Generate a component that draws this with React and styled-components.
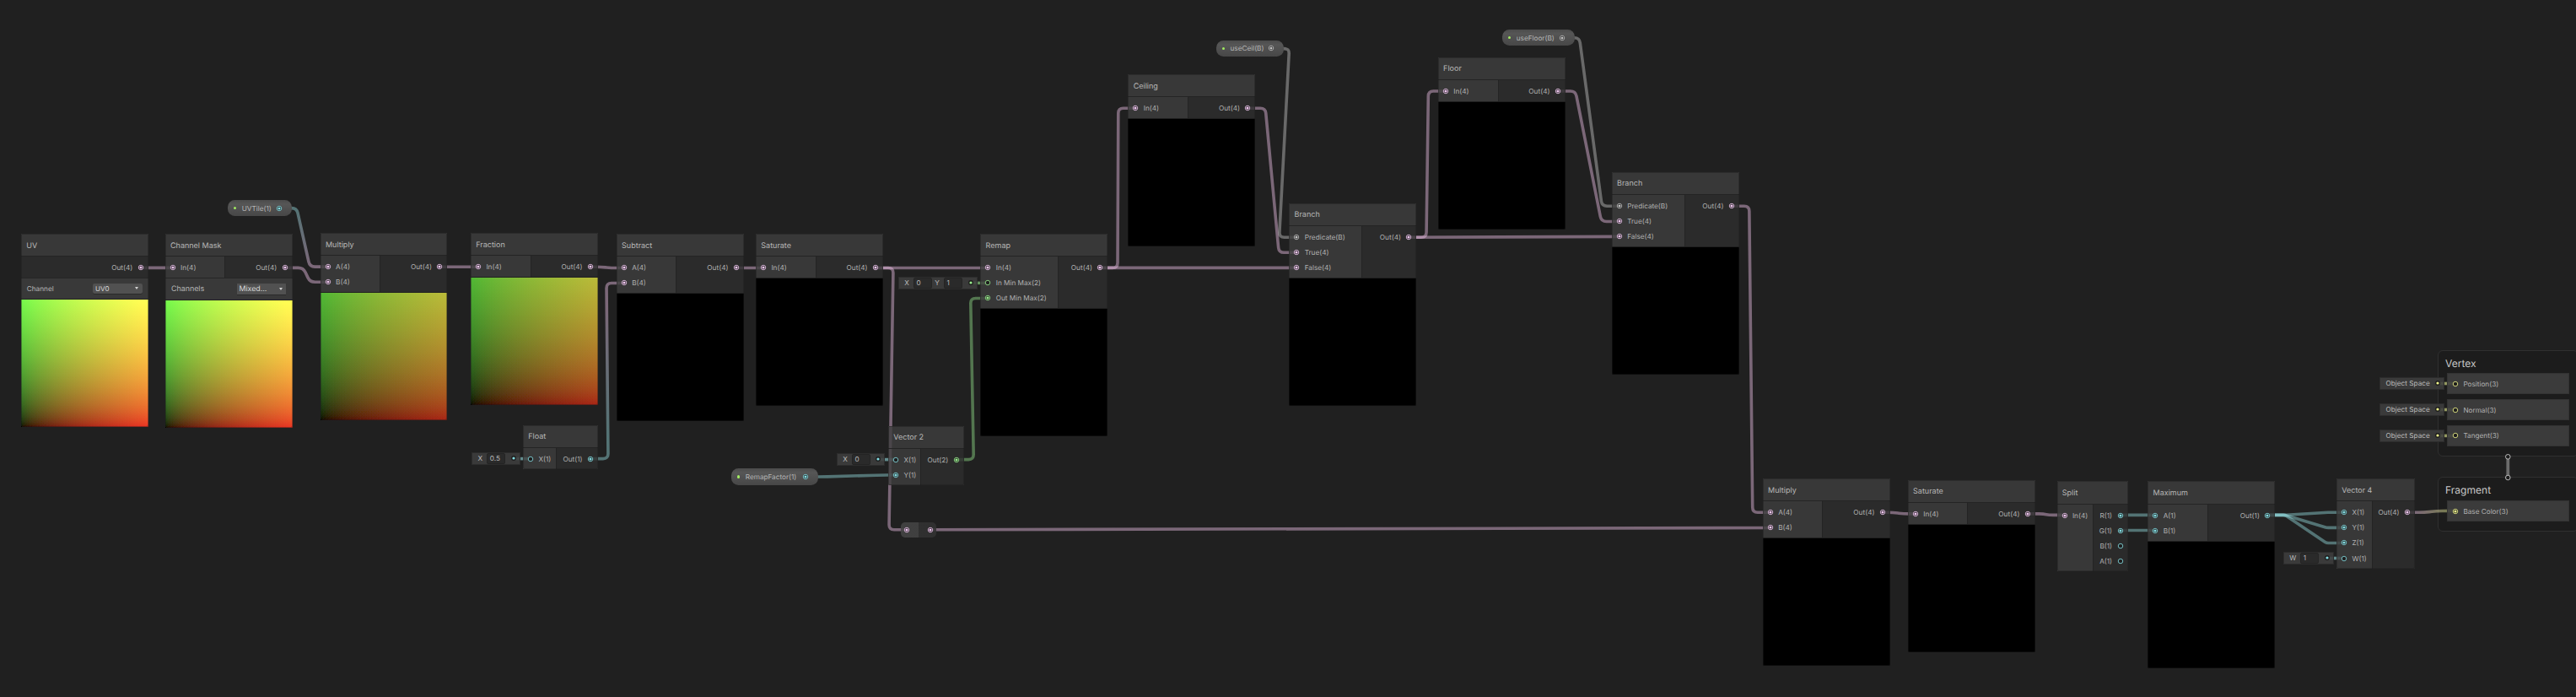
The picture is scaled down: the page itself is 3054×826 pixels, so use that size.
import React from "react";
import styled, { createGlobalStyle, css } from "styled-components";

const GlobalStyle = createGlobalStyle`
  html, body { margin: 0; background: #202020; overflow: hidden; }
  body { font-family: Inter, "Liberation Sans", sans-serif; text-rendering: geometricPrecision; }
  * { box-sizing: border-box; }
`;

const TYPES = {
  vec4: { port: "#f2c8f2", wire: "#fbcbf4" },
  vec3: { port: "#f0f58c", wire: "#f6ff9a" },
  vec2: { port: "#9aee8e", wire: "#9aef92" },
  float: { port: "#84dce2", wire: "#9be6ea" },
  bool: { port: "#c4c4c4", wire: "#d0d0d0" },
};

/* ---------- canvas ---------- */

const Canvas = styled.main`
  position: relative;
  width: 3054px;
  height: 826px;
  overflow: hidden;
  background: #202020;
`;

const WireLayer = styled.svg`
  position: absolute;
  inset: 0;
  width: 3054px;
  height: 826px;
  pointer-events: none;
`;

const onCanvas = css`
  position: absolute;
  left: ${(p) => p.$x}px;
  top: ${(p) => p.$y}px;
`;

/* ---------- node ---------- */

const NodeFrame = styled.section`
  ${onCanvas}
  width: ${(p) => p.$w}px;
  display: flex;
  flex-direction: column;
  border-radius: 1px 1px 2px 2px;

  &::after {
    content: "";
    position: absolute;
    inset: 0;
    border: 1px solid rgba(28, 28, 28, 0.42);
    border-radius: inherit;
    pointer-events: none;
  }
`;

const NodeHeader = styled.header`
  height: 27.3px;
  padding: 2px 6.3px 0;
  display: flex;
  align-items: center;
  font-size: 9px;
  color: #b8b8b8;
  background: rgba(63, 63, 63, 0.8);
  border-bottom: 1px solid #242424;
`;

const NodePorts = styled.div`
  display: flex;
  height: ${(p) => 6.9 + p.$rows * 18.1}px;
`;

const InputColumn = styled.div`
  width: ${(p) => p.$w}px;
  flex: none;
  padding: 3.9px 0 0 5px;
  background: rgba(63, 63, 63, 0.8);
  border-right: 1px solid #242424;
`;

const OutputColumn = styled.div`
  flex: 1;
  padding: 3.9px 5px 0 0;
  background: rgba(46, 46, 46, 0.8);
`;

const PortRow = styled.div`
  height: 18.1px;
  display: flex;
  align-items: center;
  justify-content: ${(p) => (p.$out ? "flex-end" : "flex-start")};
  gap: 5.4px;
  font-size: 8.2px;
  line-height: 10px;
  white-space: nowrap;
  color: #b2b2b2;
`;

const PortIcon = styled.svg`
  width: 8px;
  height: 8px;
  flex: none;
  display: block;
  overflow: visible;
`;

const Preview = styled.div`
  position: relative;
  height: 150.6px;
  margin-top: 1px;
  border-radius: 0 0 2px 2px;
  overflow: hidden;
  isolation: isolate;
  background: #000;
`;

/* Channels are summed in linear light, then encoded by the filter. */
const UVPreview = styled(Preview)`
  filter: url(#encode);
`;

const Channel = styled.div`
  position: absolute;
  inset: 0;
  mix-blend-mode: plus-lighter;
  background: linear-gradient(${(p) => p.$dir}, #000, ${(p) => p.$color});
`;

const OptionRow = styled.div`
  height: ${(p) => p.$h}px;
  margin-top: -0.4px;
  border-top: 1px solid #262626;
  padding: 0 ${(p) => (p.$bold ? 7.3 : 6.8)}px;
  display: flex;
  align-items: center;
  justify-content: space-between;
  background: #393939;
  color: #b8b8b8;
  font-size: ${(p) => (p.$bold ? 8.9 : 8.2)}px;
`;

const Dropdown = styled.div`
  width: 58.5px;
  height: ${(p) => (p.$bold ? 12.5 : 11.2)}px;
  padding: 0 4.5px 0 2.6px;
  display: flex;
  align-items: center;
  justify-content: space-between;
  border-radius: ${(p) => (p.$bold ? 0.5 : 2)}px;
  background: #515151;
  box-shadow: 0 0.7px 0.6px #242424;
  color: #dcdcdc;
  font-size: ${(p) => (p.$bold ? 8.8 : 8)}px;
`;

const Caret = styled.i`
  border: 2.8px solid transparent;
  border-top: 3px solid #d0d0d0;
  border-bottom: 0;
`;

/* ---------- property pill ---------- */

const PillFrame = styled.div`
  ${onCanvas}
  width: ${(p) => p.$w}px;
  height: 19.4px;
  padding: 0 11px 0 7px;
  display: flex;
  align-items: center;
  border-radius: 8.5px;
  background: linear-gradient(#4b4b4b, #565656 25%, #474747);
  color: #b8b8b8;
  font-size: 8.2px;
  white-space: nowrap;
`;

const ExposedDot = styled.i`
  width: 3.4px;
  height: 3.4px;
  flex: none;
  border-radius: 50%;
  background: #a2ec62;
  margin-right: 6.4px;
`;

const PillLabel = styled.span`
  flex: 1;
`;

/* ---------- inline constant ---------- */

const ConstFrame = styled.div`
  ${onCanvas}
  width: ${(p) => p.$w}px;
  height: 14.6px;
  padding: 0 4px 0 6.6px;
  display: flex;
  align-items: center;
  background: rgba(62, 62, 62, 0.88);
  border: 0.5px solid #2c2c2c;
  color: #bababa;
  font-size: 8.2px;
  white-space: nowrap;
`;

const AxisName = styled.span`
  width: ${(p) => p.$w}px;
  flex: none;
`;

const ValueField = styled.span`
  width: 22px;
  height: 12.6px;
  flex: none;
  padding-left: 3px;
  margin-right: 3.6px;
  display: flex;
  align-items: center;
  border-radius: 2px;
  background: #2a2a2a;
  border: 1px solid #242424;
`;

const SocketIcon = styled(PortIcon)`
  width: 6px;
  height: 6px;
  margin-left: auto;
`;

/* ---------- reroute ---------- */

const RerouteFrame = styled.div`
  ${onCanvas}
  width: 42.6px;
  height: 18.6px;
  padding: 0 3px;
  display: flex;
  align-items: center;
  justify-content: space-between;
  border-radius: 5px;
  background: linear-gradient(to right, rgba(68, 68, 68, 0.88) 50%, rgba(50, 50, 50, 0.88) 50%);
`;

/* ---------- master stack ---------- */

const ContextFrame = styled.section`
  ${onCanvas}
  width: 167px;
  height: ${(p) => p.$h}px;
  padding: 5px 8px;
  border: 1px solid #303030;
  border-radius: 6px;
  background: #1c1c1c;
`;

const ContextTitle = styled.h2`
  margin: 0;
  height: 19.4px;
  display: flex;
  align-items: center;
  font-size: 12.05px;
  font-weight: 400;
  color: #c8c8c8;
`;

const BlockStack = styled.div`
  ${onCanvas}
  width: 145px;
  display: flex;
  flex-direction: column;
`;

const Block = styled.div`
  height: 25px;
  margin-bottom: 5.9px;
  padding-left: 5px;
  display: flex;
  align-items: center;
  background: rgba(63, 63, 63, 0.9);
  border: 0.5px solid #333;
`;

/* ---------- parts ---------- */

function Port({ type, linked = true }) {
  const color = TYPES[type].port;
  return (
    <PortIcon viewBox="0 0 8 8">
      <circle cx="4" cy="4" r="2.75" fill="#1e1e1e" stroke={color} strokeWidth="0.9" strokeOpacity="0.9" />
      {linked && <circle cx="4" cy="4" r="1.6" fill={color} />}
    </PortIcon>
  );
}

function Node({ x, y, w, col, title, inputs = [], outputs, preview, option }) {
  const rows = Math.max(inputs.length, outputs.length);
  return (
    <NodeFrame $x={x} $y={y} $w={w}>
      <NodeHeader>{title}</NodeHeader>
      <NodePorts $rows={rows}>
        {inputs.length > 0 && (
          <InputColumn $w={col}>
            {inputs.map(([label, type, linked]) => (
              <PortRow key={label}>
                <Port type={type} linked={linked} />
                {label}
              </PortRow>
            ))}
          </InputColumn>
        )}
        <OutputColumn>
          {outputs.map(([label, type, linked]) => (
            <PortRow key={label} $out>
              {label}
              <Port type={type} linked={linked} />
            </PortRow>
          ))}
        </OutputColumn>
      </NodePorts>
      {option && (
        <OptionRow $h={option.height} $bold={option.bold}>
          {option.label}
          <Dropdown $bold={option.bold}>
            {option.value}
            <Caret />
          </Dropdown>
        </OptionRow>
      )}
      {preview === "black" && <Preview />}
      {preview === "uv" && (
        <UVPreview>
          <Channel $dir="to right" $color="rgb(217, 10, 5)" />
          <Channel $dir="to top" $color="rgb(54, 247, 23)" />
        </UVPreview>
      )}
      {preview === "uvDim" && (
        <UVPreview>
          <Channel $dir="to right" $color="rgb(113, 5, 2)" />
          <Channel $dir="to top" $color="rgb(25, 133, 11)" />
        </UVPreview>
      )}
    </NodeFrame>
  );
}

function Pill({ x, y, w, label, type }) {
  return (
    <PillFrame $x={x} $y={y} $w={w}>
      <ExposedDot />
      <PillLabel>{label}</PillLabel>
      <Port type={type} />
    </PillFrame>
  );
}

function Const({ x, y, w, type, fields = [], text, axis = 10.4 }) {
  return (
    <ConstFrame $x={x} $y={y} $w={w}>
      {text}
      {fields.map(([name, value]) => (
        <React.Fragment key={name}>
          <AxisName $w={axis}>{name}</AxisName>
          <ValueField>{value}</ValueField>
        </React.Fragment>
      ))}
      <SocketIcon viewBox="0 0 6 6">
        <circle cx="3" cy="3" r="2.9" fill="#1c1c1c" />
        <circle cx="3" cy="3" r="1.6" fill={TYPES[type].port} />
      </SocketIcon>
    </ConstFrame>
  );
}

/* Polyline with rounded corners. */
function roundedPath(pts, r = 6) {
  let d = `M${pts[0][0]} ${pts[0][1]}`;
  for (let i = 1; i < pts.length - 1; i++) {
    const [p, c, n] = [pts[i - 1], pts[i], pts[i + 1]];
    const towards = (a) => {
      const len = Math.hypot(a[0] - c[0], a[1] - c[1]);
      const k = Math.min(r, len / 2) / len;
      return `${c[0] + (a[0] - c[0]) * k} ${c[1] + (a[1] - c[1]) * k}`;
    };
    d += ` L${towards(p)} Q${c[0]} ${c[1]} ${towards(n)}`;
  }
  const e = pts[pts.length - 1];
  return `${d} L${e[0]} ${e[1]}`;
}

/* ---------- graph data ---------- */

const A4 = ["A(4)", "vec4"];
const B4 = ["B(4)", "vec4"];
const IN4 = ["In(4)", "vec4"];
const OUT4 = ["Out(4)", "vec4"];
const BRANCH_IN = [["Predicate(B)", "bool"], ["True(4)", "vec4"], ["False(4)", "vec4"]];

const NODES = [
  { x: 25, y: 277, w: 150.7, title: "UV", outputs: [OUT4], preview: "uv",
    option: { label: "Channel", value: "UV0", height: 25 } },
  { x: 195.7, y: 277, w: 151, col: 71.3, title: "Channel Mask", inputs: [IN4], outputs: [OUT4], preview: "uv",
    option: { label: "Channels", value: "Mixed...", height: 26, bold: true } },
  { x: 379.7, y: 276, w: 150.7, col: 71, title: "Multiply", inputs: [A4, B4], outputs: [OUT4], preview: "uvDim" },
  { x: 558, y: 276, w: 151, col: 71.7, title: "Fraction", inputs: [IN4], outputs: [OUT4], preview: "uvDim" },
  { x: 620, y: 503.6, w: 89, col: 40.3, title: "Float", inputs: [["X(1)", "float", false]], outputs: [["Out(1)", "float"]] },
  { x: 730.8, y: 277, w: 151, col: 71, title: "Subtract", inputs: [A4, B4], outputs: [OUT4], preview: "black" },
  { x: 896, y: 277, w: 151, col: 72, title: "Saturate", inputs: [IN4], outputs: [OUT4], preview: "black" },
  { x: 1162.3, y: 277, w: 151, col: 93, title: "Remap",
    inputs: [IN4, ["In Min Max(2)", "vec2", false], ["Out Min Max(2)", "vec2"]], outputs: [OUT4], preview: "black" },
  { x: 1053, y: 504.6, w: 89.7, col: 39.3, title: "Vector 2",
    inputs: [["X(1)", "float", false], ["Y(1)", "float"]], outputs: [["Out(2)", "vec2"]] },
  { x: 1337.4, y: 88, w: 151, col: 72, title: "Ceiling", inputs: [IN4], outputs: [OUT4], preview: "black" },
  { x: 1528.3, y: 240.8, w: 151, col: 87, title: "Branch", inputs: BRANCH_IN, outputs: [OUT4], preview: "black" },
  { x: 1704.8, y: 67.7, w: 151, col: 72.3, title: "Floor", inputs: [IN4], outputs: [OUT4], preview: "black" },
  { x: 1910.8, y: 203.8, w: 151, col: 87, title: "Branch", inputs: BRANCH_IN, outputs: [OUT4], preview: "black" },
  { x: 2089.8, y: 567, w: 151, col: 71.3, title: "Multiply", inputs: [A4, B4], outputs: [OUT4], preview: "black" },
  { x: 2261.8, y: 568.8, w: 151, col: 71.6, title: "Saturate", inputs: [IN4], outputs: [OUT4], preview: "black" },
  { x: 2438.5, y: 570.3, w: 84, col: 43, title: "Split", inputs: [IN4],
    outputs: [["R(1)", "float"], ["G(1)", "float"], ["B(1)", "float", false], ["A(1)", "float", false]] },
  { x: 2546.3, y: 570.3, w: 151, col: 71.4, title: "Maximum",
    inputs: [["A(1)", "float"], ["B(1)", "float"]], outputs: [["Out(1)", "float"]], preview: "black" },
  { x: 2770, y: 567, w: 93, col: 43, title: "Vector 4",
    inputs: [["X(1)", "float"], ["Y(1)", "float"], ["Z(1)", "float"], ["W(1)", "float", false]], outputs: [OUT4] },
];

const WIRES = [
  { t: "vec4", p: [[166.7, 317.4], [205, 317.4]] },
  { t: "float", to: "vec4", p: [[331.3, 246.6], [351.7, 246.6], [367.3, 316.1], [388.7, 316.1]] },
  { t: "vec4", p: [[337.5, 317.4], [359.5, 317.4], [367.5, 334.3], [388.7, 334.3]] },
  { t: "vec4", p: [[521.3, 316.2], [567, 316.2]] },
  { t: "vec4", p: [[699.8, 316.2], [712, 316.3], [725, 317.5], [740, 317.5]] },
  { t: "float", to: "vec4", p: [[699.8, 543.6], [721, 543.6], [719, 335.5], [740, 335.5]] },
  { t: "vec4", p: [[872.3, 317.5], [905, 317.5]] },
  { t: "vec4", p: [[1038, 317.5], [1171.5, 317.5]] },
  { t: "vec4", p: [[1038, 317.5], [1059, 317.5], [1054, 627.8], [1075, 627.8]] },
  { t: "vec4", p: [[1103, 627.8], [2099, 625.5]] },
  { t: "vec2", p: [[1133.4, 544.6], [1154.3, 544.6], [1150.7, 353.5], [1171.5, 353.5]] },
  { t: "float", p: [[954.7, 565], [975, 565.1], [1045, 563], [1062, 562.8]] },
  { t: "vec4", p: [[1304, 317.4], [1537.5, 317.4]] },
  { t: "vec4", p: [[1304, 317.4], [1325, 317.4], [1325.8, 128.3], [1346.7, 128.3]] },
  { t: "vec4", p: [[1479.2, 128.3], [1500.2, 128.3], [1516.2, 299.3], [1537.5, 299.3]] },
  { t: "bool", p: [[1507.3, 57.6], [1528.5, 57.6], [1516.6, 281.2], [1537.5, 281.2]] },
  { t: "vec4", p: [[1670, 281.2], [1920, 280.4]] },
  { t: "vec4", p: [[1670, 281.2], [1691, 281.2], [1693.4, 108], [1714, 108]] },
  { t: "vec4", p: [[1846.8, 108], [1867.8, 108], [1898.5, 262.5], [1920, 262.5]] },
  { t: "bool", p: [[1851.8, 44.7], [1872.5, 44.7], [1899.2, 244.3], [1920, 244.3]] },
  { t: "vec4", p: [[2052.8, 244.3], [2073.8, 244.3], [2077.8, 607.3], [2099, 607.3]] },
  { t: "vec4", p: [[2231.7, 607.3], [2244, 607.3], [2257, 608.9], [2271, 608.9]] },
  { t: "vec4", p: [[2403.8, 608.9], [2423, 608.9], [2429, 610.4], [2447.7, 610.4]] },
  { t: "float", p: [[2513.3, 610.4], [2555.5, 610.4]] },
  { t: "float", p: [[2513.3, 628.5], [2555.5, 628.5]] },
  { t: "float", r: 2, p: [[2688, 610.4], [2709, 610.4], [2758, 607.3], [2779.3, 607.3]] },
  { t: "float", r: 2, p: [[2688, 610.4], [2709, 610.4], [2758.3, 625.4], [2779.3, 625.4]] },
  { t: "float", r: 2, p: [[2688, 610.4], [2709, 610.4], [2758.3, 643.5], [2779.3, 643.5]] },
  { t: "vec4", to: "vec3", p: [[2854, 607.3], [2874, 607.3], [2889, 605.6], [2910, 605.4]] },
];

const CONST_WIRES = [
  { t: "float", p: [[609, 543.6], [629, 543.6]] },
  { t: "vec2", p: [[1151, 335.2], [1171.5, 335.5]] },
  { t: "float", p: [[1041.3, 544.6], [1062, 544.6]] },
  { t: "float", p: [[2759, 661.5], [2779.3, 661.5]] },
  { t: "vec3", p: [[2889.7, 454.5], [2910, 454.5]] },
  { t: "vec3", p: [[2889.7, 485.5], [2910, 485.5]] },
  { t: "vec3", p: [[2889.7, 516.4], [2910, 516.4]] },
];

function Wires({ wires, opacity }) {
  return wires.map(({ t, to, p, r }, i) => {
    const id = `blend-${i}`;
    const end = p[p.length - 1];
    return (
      <g key={i}>
        {to && (
          <linearGradient id={id} gradientUnits="userSpaceOnUse" x1={p[0][0]} y1={p[0][1]} x2={end[0]} y2={end[1]}>
            <stop offset="0.15" stopColor={TYPES[t].wire} />
            <stop offset="0.85" stopColor={TYPES[to].wire} />
          </linearGradient>
        )}
        <path
          d={roundedPath(p, r)}
          fill="none"
          stroke={to ? `url(#${id})` : TYPES[t].wire}
          strokeWidth="3.6"
          strokeOpacity={opacity}
        />
      </g>
    );
  });
}

export default function App() {
  return (
    <>
      <GlobalStyle />
      <Canvas>
        <ContextFrame $x={2890} $y={414.6} $h={126.6}>
          <ContextTitle>Vertex</ContextTitle>
        </ContextFrame>
        <ContextFrame $x={2890} $y={565.2} $h={64.6}>
          <ContextTitle>Fragment</ContextTitle>
        </ContextFrame>

        <WireLayer viewBox="0 0 3054 826">
          <filter id="encode" colorInterpolationFilters="sRGB">
            <feComponentTransfer>
              <feFuncR type="gamma" exponent="0.5" />
              <feFuncG type="gamma" exponent="0.5" />
              <feFuncB type="gamma" exponent="0.5" />
            </feComponentTransfer>
          </filter>
          <Wires wires={WIRES} opacity={0.42} />
          {CONST_WIRES.map(({ t, p }, i) => (
            <path key={i} d={roundedPath(p)} stroke={TYPES[t].wire} strokeWidth="3.6" strokeOpacity="0.55" />
          ))}
          <path d="M2973.3 541.3V566" stroke="#6c6c6c" strokeWidth="3.8" />
          <circle cx="2973.3" cy="541.3" r="2.8" fill="#1c1c1c" stroke="#bdbdbd" strokeWidth="1" />
          <circle cx="2973.3" cy="566" r="2.8" fill="#1c1c1c" stroke="#bdbdbd" strokeWidth="1" />
        </WireLayer>

        <BlockStack $x={2901} $y={442.2}>
          {["Position(3)", "Normal(3)", "Tangent(3)"].map((label) => (
            <Block key={label}>
              <PortRow>
                <Port type="vec3" linked={false} />
                {label}
              </PortRow>
            </Block>
          ))}
        </BlockStack>
        <BlockStack $x={2901} $y={593}>
          <Block>
            <PortRow>
              <Port type="vec3" />
              Base Color(3)
            </PortRow>
          </Block>
        </BlockStack>

        {NODES.map((n) => (
          <Node key={`${n.title}-${n.x}`} {...n} />
        ))}

        <Pill x={270} y={237} w={76.2} label="UVTile(1)" type="float" />
        <Pill x={867} y={555.2} w={102.8} label="RemapFactor(1)" type="float" />
        <Pill x={1441.7} y={47.8} w={80.6} label="useCeil(B)" type="bool" />
        <Pill x={1781} y={35} w={86} label="useFloor(B)" type="bool" />

        <Const x={558.8} y={536} w={58} type="float" fields={[["X", "0.5"]]} />
        <Const x={991.6} y={537} w={57.7} type="float" fields={[["X", "0"]]} />
        <Const x={1064.6} y={328} w={94.6} type="vec2" fields={[["X", "0"], ["Y", "1"]]} />
        <Const x={2706.6} y={654} w={60.4} type="float" fields={[["W", "1"]]} axis={12.6} />
        <Const x={2821} y={447.2} w={76.5} type="vec3" text="Object Space" />
        <Const x={2821} y={478.1} w={76.5} type="vec3" text="Object Space" />
        <Const x={2821} y={509} w={76.5} type="vec3" text="Object Space" />

        <RerouteFrame $x={1067.5} $y={618.7}>
          <Port type="vec4" />
          <Port type="vec4" />
        </RerouteFrame>
      </Canvas>
    </>
  );
}
